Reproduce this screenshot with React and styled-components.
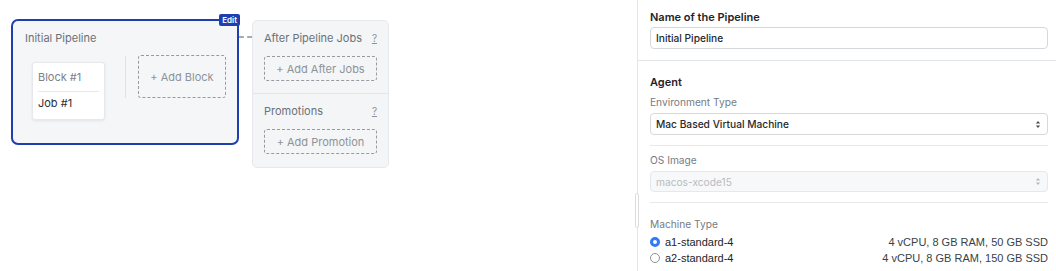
import styled, { createGlobalStyle } from 'styled-components'

const Global = createGlobalStyle`
  html, body {
    margin: 0;
    padding: 0;
    background: #fff;
  }
  body {
    font-family: Inter, "Noto Sans", sans-serif;
    -webkit-font-smoothing: antialiased;
  }
`

const Page = styled.div`
  display: flex;
  width: 1056px;
  height: 271px;
  overflow: hidden;
`

const Canvas = styled.div`
  flex: 1;
  display: flex;
  align-items: flex-start;
  padding: 19px 0 0 11px;
`

const PipelineCard = styled.div`
  position: relative;
  width: 228px;
  height: 126px;
  flex-shrink: 0;
  border: 2px solid #1f3fae;
  border-radius: 7px;
  background: #f5f6f8;
  padding: 10px 0 0 12px;
  box-sizing: border-box;
`

const EditBadge = styled.div`
  position: absolute;
  top: -7px;
  right: -3px;
  height: 12px;
  padding: 0 3px;
  border-radius: 2px;
  background: #1f3fae;
  color: #fff;
  font-size: 8px;
  font-weight: 600;
  line-height: 12px;
`

const CardTitle = styled.div`
  font-size: 11px;
  color: #6b7178;
  line-height: 14px;
`

const BlockRow = styled.div`
  display: flex;
  align-items: flex-start;
  margin-top: 10px;
  padding-left: 7px;
`

const BlockCard = styled.div`
  width: 73px;
  height: 58px;
  flex-shrink: 0;
  background: #fff;
  border-radius: 3px;
  border: 1px solid #e6e8eb;
  box-shadow: 0 1px 3px rgba(0, 0, 0, 0.08);
  padding: 0 5px;
  box-sizing: border-box;
  margin-top: 7px;
`

const BlockName = styled.div`
  font-size: 11px;
  color: #7b8188;
  line-height: 14px;
  padding: 7px 0 7px;
  border-bottom: 1px solid #e6e8ea;
`

const JobName = styled.div`
  font-size: 11px;
  color: #2a2e33;
  line-height: 14px;
  padding-top: 4px;
`

const VDivider = styled.div`
  width: 1px;
  height: 42px;
  background: #dfe2e5;
  margin: 1px 12px 0 20px;
`

const DashedButton = styled.div`
  display: flex;
  align-items: center;
  justify-content: center;
  flex-shrink: 0;
  width: ${p => p.w}px;
  height: ${p => p.h}px;
  border: 1.5px dashed #959ba1;
  border-radius: 3px;
  box-sizing: border-box;
  font-size: 11px;
  color: #8d9399;
`

const Connector = styled.div`
  width: 13px;
  margin-top: 17px;
  border-top: 2px dashed #a5abb1;
`

const SidePanel = styled.div`
  width: 137px;
  height: 148px;
  margin-top: 1px;
  box-sizing: border-box;
  background: #f4f5f7;
  border: 1px solid #e6e8eb;
  border-radius: 5px;
  display: flex;
  flex-direction: column;
`

const Section = styled.div`
  padding: 10px 11px 12px;
  border-top: ${p => (p.first ? 'none' : '1px solid #e3e5e8')};
  display: flex;
  flex-direction: column;
  gap: 11px;
`

const SectionHead = styled.div`
  display: flex;
  justify-content: space-between;
  align-items: center;
  font-size: 11px;
  line-height: 14px;
  color: #6b7178;
`

const Help = styled.span`
  font-size: 10px;
  color: #8d9399;
  text-decoration: underline;
  text-underline-offset: 1px;
`

const Sidebar = styled.div`
  position: relative;
  width: 419px;
  height: 271px;
  flex-shrink: 0;
  border-left: 1px solid #e3e5e8;
  box-sizing: border-box;
`

const Handle = styled.div`
  position: absolute;
  left: -3px;
  top: 193px;
  width: 4px;
  height: 35px;
  border: 1px solid #dadde0;
  border-radius: 3px;
  background: #fff;
  box-sizing: border-box;
`

const Group = styled.div`
  padding: ${p => p.pad || '9px 8px 11px 12px'};
  border-bottom: ${p => (p.full ? '1px solid #e3e5e8' : 'none')};
`

const Inset = styled.div`
  margin: 0 8px 0 12px;
  height: 1px;
  background: #e6e8ea;
`

const Heading = styled.div`
  font-size: 11px;
  font-weight: 600;
  color: #1f2328;
  line-height: 14px;
  margin-bottom: ${p => p.mb || 4}px;
`

const Label = styled.div`
  font-size: 10.2px;
  color: #767c83;
  line-height: 14px;
  margin-bottom: ${p => p.mb || 4}px;
`

const Field = styled.div`
  display: flex;
  align-items: center;
  justify-content: space-between;
  height: ${p => p.h || 22}px;
  box-sizing: border-box;
  padding: 0 6px 0 5px;
  border: 1px solid ${p => (p.disabled ? '#e6e8ea' : '#d6d9dc')};
  border-radius: 4px;
  background: ${p => (p.disabled ? '#f7f8f9' : '#fff')};
  font-size: 10.2px;
  color: ${p => (p.disabled ? '#b7bbbf' : '#24282d')};
  font-weight: ${p => (p.disabled ? 400 : 500)};
`

const Chevrons = ({ color }) => (
  <svg width="6" height="9" viewBox="0 0 6 9">
    <path d="M0.8 3.4 L3 1 L5.2 3.4 Z" fill={color} />
    <path d="M0.8 5.6 L3 8 L5.2 5.6 Z" fill={color} />
  </svg>
)

const RadioRow = styled.div`
  display: flex;
  align-items: center;
  height: 16px;
  font-family: "Liberation Sans", Arial, sans-serif;
  font-size: 11px;
  color: #1f2328;
`

const RadioDot = styled.span`
  width: 10px;
  height: 10px;
  border-radius: 50%;
  box-sizing: border-box;
  margin-right: 5px;
  border: ${p => (p.checked ? '3px solid #2f7cf6' : '1px solid #8e9398')};
  background: #fff;
`

const Spec = styled.span`
  margin-left: auto;
  color: #3a3f45;
`

const machines = [
  { name: 'a1-standard-4', spec: '4 vCPU, 8 GB RAM, 50 GB SSD', checked: true },
  { name: 'a2-standard-4', spec: '4 vCPU, 8 GB RAM, 150 GB SSD', checked: false },
]

export default function App() {
  return (
    <Page>
      <Global />
      <Canvas>
        <PipelineCard>
          <EditBadge>Edit</EditBadge>
          <CardTitle>Initial Pipeline</CardTitle>
          <BlockRow>
            <BlockCard>
              <BlockName>Block #1</BlockName>
              <JobName>Job #1</JobName>
            </BlockCard>
            <VDivider />
            <DashedButton w={88} h={43}>+ Add Block</DashedButton>
          </BlockRow>
        </PipelineCard>
        <Connector />
        <SidePanel>
          <Section first>
            <SectionHead>
              After Pipeline Jobs <Help>?</Help>
            </SectionHead>
            <DashedButton w={113} h={25}>+ Add After Jobs</DashedButton>
          </Section>
          <Section>
            <SectionHead>
              Promotions <Help>?</Help>
            </SectionHead>
            <DashedButton w={113} h={25}>+ Add Promotion</DashedButton>
          </Section>
        </SidePanel>
      </Canvas>
      <Sidebar>
        <Handle />
        <Group full pad="10px 8px 11px 12px">
          <Heading mb={3}>Name of the Pipeline</Heading>
          <Field>Initial Pipeline</Field>
        </Group>
        <Group pad="14px 8px 10px 12px">
          <Heading mb={6}>Agent</Heading>
          <Label>Environment Type</Label>
          <Field>
            Mac Based Virtual Machine
            <Chevrons color="#4a4f55" />
          </Field>
        </Group>
        <Inset />
        <Group pad="7px 8px 10px 12px">
          <Label>OS Image</Label>
          <Field disabled h={21}>
            macos-xcode15
            <Chevrons color="#b7bbbf" />
          </Field>
        </Group>
        <Inset />
        <Group pad="14px 8px 0 12px">
          <Label mb={3}>Machine Type</Label>
          {machines.map(m => (
            <RadioRow key={m.name}>
              <RadioDot checked={m.checked} />
              {m.name}
              <Spec>{m.spec}</Spec>
            </RadioRow>
          ))}
        </Group>
      </Sidebar>
    </Page>
  )
}
